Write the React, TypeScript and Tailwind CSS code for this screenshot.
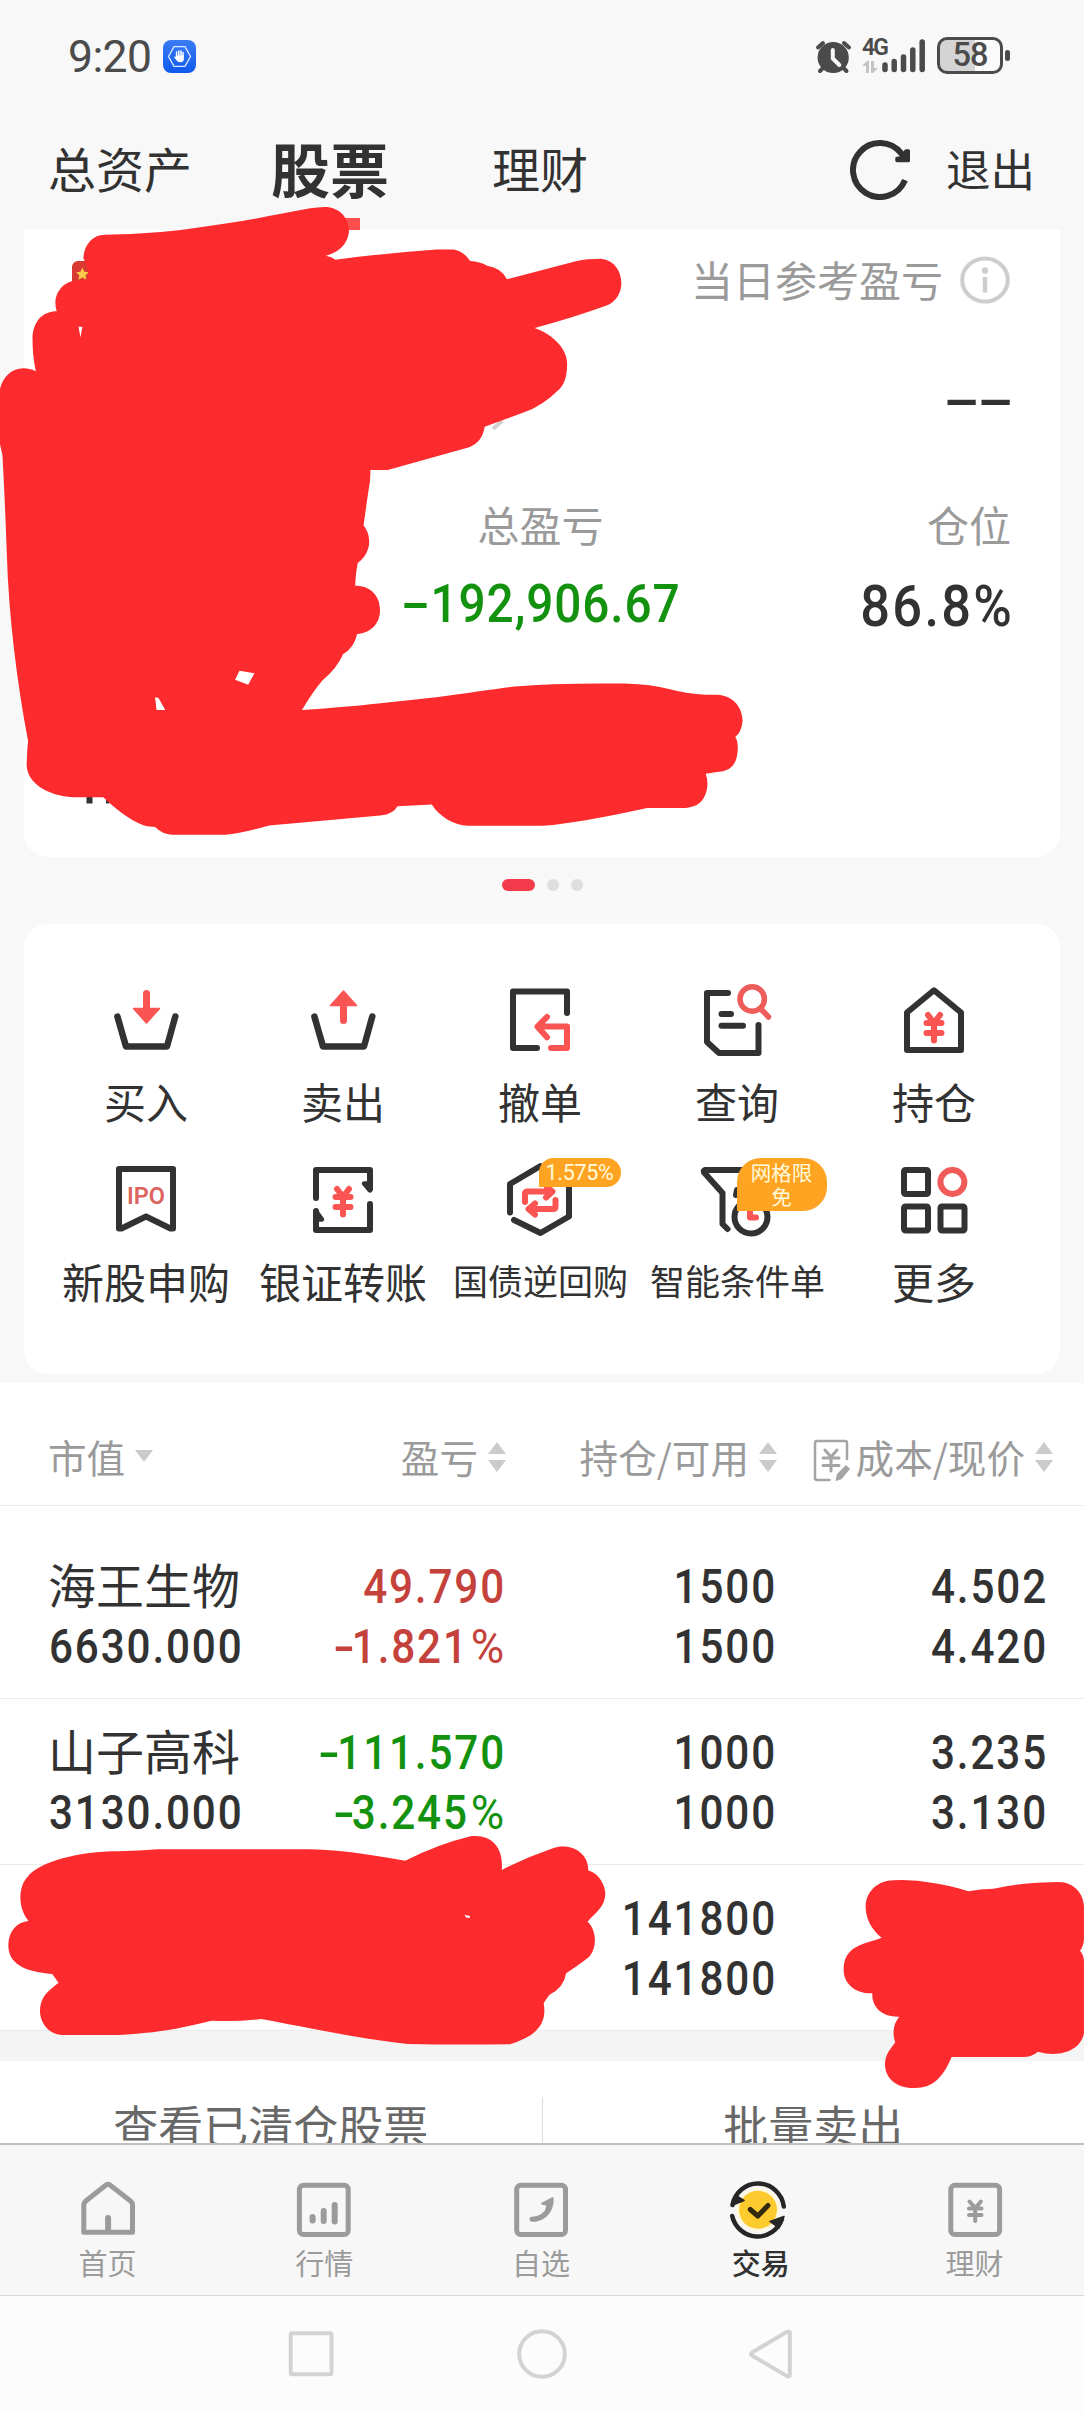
import React from "react";

const CJK = "font-['Noto_Sans_CJK_SC',sans-serif]";
const NUM = "font-[Roboto,'Noto_Sans_CJK_SC',sans-serif]";
const DARK = "#323232";
const RED = "#fa5553";

type IconProps = { box: string; size?: string; children: React.ReactNode };

function Icon({ box, size = "h-[80px] w-[80px]", children }: IconProps) {
  return (
    <svg
      viewBox={box}
      className={`block shrink-0 overflow-visible ${size}`}
      fill="none"
      stroke={DARK}
      strokeWidth={6}
      strokeLinecap="round"
      strokeLinejoin="round"
    >
      {children}
    </svg>
  );
}

function StatusBar() {
  return (
    <div className="flex h-[112px] shrink-0 items-start pr-[75px] pl-[68px] pt-[35px]">
      <span className={`${NUM} h-[44px] w-[95px] text-[44.5px] leading-[44px] tracking-[-0.6px] text-[#4b4b4b]`}>9:20</span>
      <svg viewBox="0 0 33 33" className="mt-[5px] h-[33px] w-[33px]" fill="none">
        <defs>
          <linearGradient id="blue" x1="0" y1="0" x2="0" y2="1">
            <stop offset="0" stopColor="#3b7cf5" />
            <stop offset="1" stopColor="#0f5aec" />
          </linearGradient>
        </defs>
        <rect width="33" height="33" rx="8" fill="url(#blue)" />
        <path d="M5.5 16.5 11 6.7h11l5.5 9.8L22 26.3H11z" stroke="#dbe9ff" strokeWidth="1.3" />
        <path d="M13.6 16.5v-4.4M15.8 16v-5M18 16v-5M20 16.5v-4" stroke="#fff" strokeWidth="1.5" strokeLinecap="round" />
        <path d="M12.8 15.5h8v3.4q0 3.3-3.5 3.3-2.6 0-4-2.2l-2.3-2.7q.5-1.5 1.8-.3z" fill="#fff" />
      </svg>
      <div className="ml-auto flex items-start">
        <svg viewBox="815 39 37 35" className="mt-[4px] h-[35px] w-[37px]" fill="none" stroke="#4b4b4b" strokeLinecap="round">
          <circle cx="833.2" cy="57.5" r="15.6" fill="#4b4b4b" stroke="none" />
          <path d="M818 47.5l5-4.5M849 47.5l-5-4.5M820 71l4-4M846.500 71l-4-4" strokeWidth="4" />
          <path d="M832.800 50v8.500l6.500 6.500" stroke="#f8f8f8" strokeWidth="4" strokeLinejoin="round" />
        </svg>
        <div className="ml-[10px] flex h-[38px] w-[26px] flex-col">
          <span className={`${NUM} mt-[1px] text-[23px] leading-[23px] font-semibold tracking-[-2px] text-[#4b4b4b]`}>4G</span>
          <svg viewBox="0 0 16 12" className="mt-[2px] h-[12px] w-[16px]" fill="#c4c4c4">
            <path d="M0 5 5 0h2v12H4V5zM9 0h3v7h4l-5 5H9z" />
          </svg>
        </div>
        <svg viewBox="880 38 47 36" className="-ml-[8px] mt-[3px] h-[36px] w-[47px]" stroke="#4b4b4b" strokeWidth="5.500" strokeLinecap="round">
          <path d="M885 65v4.500M894.200 61.500v8M903.500 57v12.500M912.800 50v19.500M922.200 42v27.500" />
        </svg>
        <div className="ml-[10px] mt-[2px] flex h-[37px] w-[66px] items-center justify-center rounded-[10px] border-[3px] border-[#4b4b4b] bg-[linear-gradient(to_right,#d4d4d4_58%,#fbfbfb_58%)]">
          <span className={`${NUM} text-[32.5px] leading-[31px] font-medium tracking-[-1px] text-[#4b4b4b]`}>58</span>
        </div>
        <div className="ml-[2px] mt-[15px] -mr-[1px] h-[11px] w-[5px] rounded-full bg-[#4b4b4b]" />
      </div>
    </div>
  );
}

function TopTabs() {
  return (
    <div className={`${CJK} flex h-[118px] shrink-0 items-start pl-[48px] text-[#323232]`}>
      <span className="mt-[30px] w-[222px] text-[48px] leading-[50px]">总资产</span>
      <div className="flex w-[120px] flex-col items-center">
        <span className="mt-[24px] text-[59px] leading-[64px] font-bold">股票</span>
        <span className="mt-[18px] h-[12px] w-[60px] bg-[#fd4f4f]" />
      </div>
      <span className="ml-[102px] mt-[30px] text-[48px] leading-[50px]">理财</span>
      <div className="ml-auto flex items-start pr-[49px]">
        <svg viewBox="850 140 60 60" className="mt-[28px] h-[60px] w-[60px]" fill="none" stroke={DARK} strokeWidth="6">
          <path d="M905 180.200A27 27 0 1 1 901.300 153.400l3.200 4.600" />
          <path d="M897 160.500v-2q4-.5 6.500-2.500.5-3 2.500-5h2.300v9.500z" fill={DARK} strokeWidth="3.500" strokeLinejoin="round" />
        </svg>
        <span className="ml-[36px] mt-[32px] text-[44.5px] leading-[48px]">退出</span>
      </div>
    </div>
  );
}

function AssetCard() {
  return (
    <section className="mx-[24px] flex h-[627px] shrink-0 flex-col rounded-b-[24px] bg-white px-[50px] pt-[26px]">
      <div className="flex h-[48px] items-center justify-end">
        <span className={`${CJK} -mt-[3px] text-[42px] leading-[48px] text-[#9a9a9a]`}>当日参考盈亏</span>
        <svg viewBox="0 0 50 48" className="ml-[17px] h-[48px] w-[50px]" fill="none" stroke="#cdcdcd">
          <ellipse cx="25" cy="24" rx="22.800" ry="21.500" strokeWidth="4" />
          <circle cx="25" cy="14.500" r="3.200" fill="#cdcdcd" stroke="none" />
          <path d="M25 21v15.500" strokeWidth="4.500" />
        </svg>
      </div>
      <div className={`${NUM} mt-[68px] flex h-[56px] origin-right scale-x-[1.95] justify-end text-[56px] leading-[56px] font-medium tracking-[-1.7px] text-[#323232]`}>
        <span className="-mr-[0.5px] whitespace-nowrap">--</span>
      </div>
      <div className={`${CJK} mt-[72px] grid h-[48px] grid-cols-3 text-[42px] leading-[48px] text-[#9a9a9a]`}>
        <span className="col-start-2 -ml-[3px] text-center">总盈亏</span>
        <span className="-mr-[1px] text-right">仓位</span>
      </div>
      <div className={`${NUM} mt-[24px] grid h-[64px] grid-cols-3 font-medium`}>
        <span className="col-start-2 scale-x-[0.9] pr-[1px] text-center text-[53px] leading-[64px] tracking-[1px] whitespace-nowrap text-[#13920f]">
          <span className="inline-block w-[31px] scale-x-[1.8]">-</span>192,906.67
        </span>
        <span className="-mr-[4px] origin-right scale-x-[0.92] pt-[3px] text-right text-[57px] leading-[64px] tracking-[2.4px] text-[#323232]">86.8%</span>
      </div>
    </section>
  );
}

const Yuan = ({ x, y, color = RED }: { x: number; y: number; color?: string }) => (
  <path
    transform={`translate(${x} ${y})`}
    d="M-6 -12.500 0 -4.500 6 -12.500M-7.500 -4.500h15M-7.500 5.500h15M0 -4v17"
    stroke={color}
    strokeWidth="6"
  />
);

const actions: { label: string; small?: boolean; icon: React.ReactNode; badge?: React.ReactNode }[] = [
  {
    label: "买入",
    icon: (
      <Icon box="106 980 80 80">
        <path d="M117.400 1016.500 126 1046.500h41l8.300-30" strokeWidth="6.500" />
        <path d="M146.500 993.500v16" stroke={RED} strokeWidth="7" />
        <path d="M133.500 1008.500h26l-13 14.500z" fill={RED} stroke={RED} strokeWidth="1.500" />
      </Icon>
    ),
  },
  {
    label: "卖出",
    icon: (
      <Icon box="303 980 80 80">
        <path d="M314.400 1016.500 323 1046.500h41l8.300-30" strokeWidth="6.500" />
        <path d="M343.500 1005v15.500" stroke={RED} strokeWidth="7" />
        <path d="M330.500 1005.500h26l-13-14.500z" fill={RED} stroke={RED} strokeWidth="1.500" />
      </Icon>
    ),
  },
  {
    label: "撤单",
    icon: (
      <Icon box="500 980 80 80">
        <path d="M537 1048H513V991.500h54V1013" />
        <path d="M551 1048h16V1026.500H538M547 1017 537.500 1026.700l9.500 10.500" stroke={RED} />
      </Icon>
    ),
  },
  {
    label: "查询",
    icon: (
      <Icon box="697 980 80 80">
        <path d="M728 993h-21v49l12 11h39.500v-28M721.500 1014h9.500M721.500 1025.700h21.500" />
        <circle cx="752.200" cy="999" r="12.200" stroke="#ee5d59" strokeWidth="5.500" />
        <path d="M761 1009l7.500 8" stroke="#ee5d59" strokeWidth="5.500" />
      </Icon>
    ),
  },
  {
    label: "持仓",
    icon: (
      <Icon box="894 980 80 80">
        <path d="M934 990.300 961 1012.500V1050H907v-37.500z" />
        <Yuan x={934} y={1027.500} />
      </Icon>
    ),
  },
  {
    label: "新股申购",
    icon: (
      <Icon box="106 1160 80 80">
        <path d="M119 1169h54v59.500h-2.500L146 1216.500l-24.500 12H119z" />
        <text
          x="146"
          y="1204"
          textAnchor="middle"
          stroke="none"
          fill="#dc6461"
          className="font-[Roboto,sans-serif] text-[23.500px] font-semibold"
        >
          IPO
        </text>
      </Icon>
    ),
  },
  {
    label: "银证转账",
    icon: (
      <Icon box="303 1160 80 80">
        <path d="M316 1198V1170h54v19M370 1204v26H316v-19" />
        <path d="M370 1190.500 364 1183.500h6zM316 1211l6 8.500h-6z" fill={DARK} strokeWidth="4.500" />
        <Yuan x={343} y={1201.500} />
      </Icon>
    ),
  },
  {
    label: "国债逆回购",
    small: true,
    icon: (
      <Icon box="500 1160 80 80">
        <path d="M510 1212.500V1184L540.500 1166l28.500 17v33.500L540.500 1233 514 1220" />
        <path d="M525 1202v-8q0-2.500 2.500-2.500H551M547 1187l5.500 4.500-6.500 6M555.500 1200v6.500q0 2.500-2.500 2.500H529M535 1203.500l-6.500 5.500 6.500 5.500" stroke={RED} />
      </Icon>
    ),
    badge: (
      <span className={`${NUM} absolute left-[39px] -top-[2px] flex h-[29px] w-[82px] items-center justify-center rounded-[15px] rounded-bl-none bg-[#ffa422] text-[21.5px] leading-[29px] tracking-[-0.3px] text-[#fffbdc]`}>
        1.575%
      </span>
    ),
  },
  {
    label: "智能条件单",
    small: true,
    icon: (
      <Icon box="697 1160 80 80">
        <path d="M746 1170H705q-2.500 1 0 3.500l17.500 19.500V1224l5 5" />
        <path d="M737 1190l-1 5" />
        <circle cx="751" cy="1217" r="16.500" />
        <path d="M750 1209v8.500h6" stroke={RED} />
      </Icon>
    ),
    badge: (
      <span className={`${CJK} absolute left-[40px] -top-[2px] flex h-[53px] w-[90px] flex-col items-center rounded-[24px] rounded-bl-none bg-[#ffa422] pt-[2px] text-[20.5px] leading-[24px] text-[#fffbdc]`}>
        <span>网格限</span>
        <span>免</span>
      </span>
    ),
  },
  {
    label: "更多",
    icon: (
      <Icon box="894 1160 80 80">
        <rect x="904" y="1170" width="24" height="24" rx="1.500" />
        <rect x="904" y="1206.500" width="24" height="24" rx="1.500" />
        <rect x="940.500" y="1206.500" width="24" height="24" rx="1.500" />
        <circle cx="952.400" cy="1182" r="12" stroke="#f15c5a" />
      </Icon>
    ),
  },
];

function QuickActions() {
  return (
    <section className="mx-[24px] h-[450px] shrink-0 rounded-[24px] bg-white pt-[56px] pl-[23px]">
      <div className="grid w-[985px] grid-cols-5">
        {actions.map((a) => (
          <div key={a.label} className="flex h-[180px] flex-col items-center">
            <div className="relative">
              {a.icon}
              {a.badge}
            </div>
            <span
              className={`${CJK} leading-[48px] whitespace-nowrap text-[#323232] ${a.small ? "mt-[16px] ml-[2px] text-[35px]" : "mt-[17px] ml-[1px] text-[42px]"}`}
            >
              {a.label}
            </span>
          </div>
        ))}
      </div>
    </section>
  );
}

function SortArrows({ down }: { down?: boolean }) {
  return down ? (
    <svg viewBox="0 0 18 12" className="ml-[10px] h-[12px] w-[18px]" fill="#cbcbcb">
      <path d="M0 0h18L9 12z" />
    </svg>
  ) : (
    <svg viewBox="0 0 18 30" className="mt-[2px] ml-[10px] h-[30px] w-[18px]" fill="#cbcbcb">
      <path d="M0 12h18L9 0zM0 18h18L9 30z" />
    </svg>
  );
}

const COLS = "grid grid-cols-[200px_257px_271px_277px] pl-[48px]";

const holdings = [
  { name: "海王生物", value: "6630.000", pnl: "49.790", pct: "-1.821%", tone: "text-[#c4423b]", qty: "1500", avail: "1500", cost: "4.502", price: "4.420" },
  { name: "山子高科", value: "3130.000", pnl: "-111.570", pct: "-3.245%", tone: "text-[#13920f]", qty: "1000", avail: "1000", cost: "3.235", price: "3.130" },
  { name: "", value: "", pnl: "", pct: "", tone: "", qty: "141800", avail: "141800", cost: "", price: "" },
];

function Figure({ text, left }: { text: string; left?: boolean }) {
  const negative = text.startsWith("-");
  const percent = text.endsWith("%");
  const body = text.slice(negative ? 1 : 0, percent ? -1 : undefined);
  return (
    <span className={`block h-[60px] scale-x-[0.88] whitespace-nowrap ${left ? "ml-[1px] origin-left" : "-mr-[1px] origin-right"}`}>
      {negative && <span className="inline-block w-[25px] scale-x-[1.5]">-</span>}
      {body}
      {percent && <span className="ml-[5px] inline-block origin-right scale-x-[1.08] font-normal">%</span>}
    </span>
  );
}

function Holdings() {
  return (
    <section className="shrink-0 bg-white">
      <div className={`${COLS} ${CJK} h-[123px] items-center border-b border-[#ebebeb] pt-[24px] text-[38.6px] leading-[44px] whitespace-nowrap text-[#9a9a9a]`}>
        <span className="flex items-center">市值<SortArrows down /></span>
        <span className="flex translate-x-[1px] items-center justify-end">盈亏<SortArrows /></span>
        <span className="flex translate-x-[1px] items-center justify-end">持仓/可用<SortArrows /></span>
        <span className="flex items-center justify-end">
          <svg viewBox="812 1439 38 43" className="mt-[8px] mr-[5px] h-[43px] w-[38px]" fill="none" stroke="#a5a5a5" strokeWidth="2.500" strokeLinecap="round">
            <path d="M846 1459v-16q0-2-2-2h-28q-2 0-2 2v35q0 2 2 2h12.500" />
            <path d="M824 1450l6 7 6-7M822 1458h16M822 1465.500h16M830 1458v13" strokeWidth="3" />
            <path d="M835.500 1480l1-5.500 8.500-8.500 3 3-8 9.500z" fill="#a5a5a5" strokeWidth="1.500" />
          </svg>
          成本/现价<SortArrows />
        </span>
      </div>
      {holdings.map((h, i) => (
        <div
          key={i}
          className={`${COLS} ${NUM} border-b border-[#ebebeb] text-[48px] leading-[60px] font-medium tracking-[2.1px] text-[#323232] ${i === 0 ? "h-[193px] pt-[51px]" : "h-[166px] pt-[24px]"}`}
        >
          <div>
            <span className={`${CJK} block h-[60px] -translate-y-[4px] font-normal tracking-normal whitespace-nowrap`}>{h.name}</span>
            <Figure text={h.value} left />
          </div>
          <div className={`text-right ${h.tone}`}>
            <Figure text={h.pnl} />
            <Figure text={h.pct} />
          </div>
          <div className="text-right">
            <Figure text={h.qty} />
            <Figure text={h.avail} />
          </div>
          <div className="pr-[6px] text-right">
            <Figure text={h.cost} />
            <Figure text={h.price} />
          </div>
        </div>
      ))}
      <div className="h-[30px] bg-[#f4f4f4]" />
      <div className={`${CJK} flex h-[82px] overflow-hidden text-center text-[45px] leading-[60px] text-[#686868]`}>
        <span className="flex-1 pt-[34px]">查看已清仓股票</span>
        <span className="mt-[36px] w-px bg-[#dcdcdc]" />
        <span className="flex-1 pt-[34px]">批量卖出</span>
      </div>
    </section>
  );
}

const G = "#9b9b9b";
const NAV_SIZE = "h-[60px] w-[60px]";

const navItems = [
  {
    label: "首页",
    icon: (
      <Icon box="78.500 2180 60 60" size={NAV_SIZE}>
        <g stroke={G} strokeWidth="5">
          <path d="M106.500 2185q2-1.500 4 0l20.500 16q2 1.500 2 4v27.300H84.300V2205q0-2.500 2-4z" />
          <path d="M108.600 2218v13" strokeWidth="6" />
        </g>
      </Icon>
    ),
  },
  {
    label: "行情",
    icon: (
      <Icon box="295.300 2180 60 60" size={NAV_SIZE}>
        <g stroke={G}>
          <rect x="299.700" y="2185.300" width="48.800" height="49.200" rx="4" strokeWidth="5" />
          <path d="M312.900 2217v3.500M324 2211v10M335 2205v16.500" />
        </g>
      </Icon>
    ),
  },
  {
    label: "自选",
    icon: (
      <Icon box="512 2180 60 60" size={NAV_SIZE}>
        <g stroke={G} strokeWidth="5">
          <rect x="516.700" y="2185.300" width="48.800" height="49.200" rx="4" />
          <path d="M532 2219.300Q545 2219 549.500 2207" />
          <path d="M542.500 2203.500 552.500 2198.500Q553 2208 546 2215.500L547.500 2204.500z" fill={G} strokeWidth="2.500" />
        </g>
      </Icon>
    ),
  },
  {
    label: "交易",
    active: true,
    icon: (
      <Icon box="729 2180 60 60" size={NAV_SIZE}>
        <circle cx="758" cy="2209.800" r="22" fill="#fff8e0" stroke="none" />
        <circle cx="758" cy="2209.800" r="19" fill="#fecb2f" stroke="none" />
        <g stroke="#262626" strokeWidth="4.500">
          <path d="M732.500 2205A26 26.500 0 0 1 783.800 2206.500" />
          <path d="M732.200 2216A26 26.500 0 0 0 782 2219" />
          <path d="M731.500 2205.500 736 2195.500 744 2200.500zM784 2216.500 770 2221.500 779 2228z" fill="#262626" strokeWidth="1.500" />
          <path d="M750.300 2209.500 757.800 2216 768 2205.500" strokeWidth="5" stroke="#33290d" />
        </g>
      </Icon>
    ),
  },
  {
    label: "理财",
    icon: (
      <Icon box="946 2180 60 60" size={NAV_SIZE}>
        <rect x="950.800" y="2185.300" width="48.800" height="49.200" rx="4" stroke={G} strokeWidth="5" />
        <path d="M969.500 2201.500 975.200 2208l5.700-6.500M969 2208.500h12.500M969 2215h12.500M975.200 2208.500v12.500" stroke={G} strokeWidth="4" />
      </Icon>
    ),
  },
];

function BottomNav() {
  return (
    <nav className="grid h-[153px] shrink-0 grid-cols-5 border-t-2 border-b border-t-[#c0c0c0] border-b-[#d9d9d9] bg-[#f7f7f7]">
      {navItems.map((n) => (
        <div key={n.label} className="flex flex-col items-center pt-[35px]">
          {n.icon}
          <span
            className={`${CJK} mt-[4px] text-[29px] leading-[36px] ${n.active ? "translate-x-[2px] font-medium text-[#303030]" : "-translate-x-[1px] text-[#9b9b9b]"}`}
          >
            {n.label}
          </span>
        </div>
      ))}
    </nav>
  );
}

function SystemNav() {
  return (
    <div className="flex h-[116px] shrink-0 items-start justify-center gap-[180px] bg-[#fcfcfc] pt-[32px]">
      <Icon box="287 2328 50 52" size="h-[52px] w-[50px]">
        <rect x="290.700" y="2333.300" width="40.800" height="41" rx="1.500" stroke="#d3d3d3" strokeWidth="4" />
      </Icon>
      <Icon box="517 2328 50 52" size="h-[52px] w-[50px]">
        <circle cx="542" cy="2354" r="22.800" stroke="#d3d3d3" strokeWidth="4" />
      </Icon>
      <Icon box="747 2328 50 52" size="h-[52px] w-[50px]">
        <path d="M752 2352.500 787 2331.800q2.800-1.300 2.800 1.500v41.500q0 2.500-2.800 1.300L752 2355.500q-2-1.500 0-3z" stroke="#d3d3d3" strokeWidth="4" />
      </Icon>
    </div>
  );
}

/* Freehand marker strokes that lie over the account details. */
function MarkerOverlay() {
  return (
    <svg viewBox="0 0 1084 2412" className="pointer-events-none absolute inset-0 h-[2412px] w-[1084px]" fill="#fd2b2d">
      <rect x="72" y="261" width="30" height="30" rx="6" fill="#d83a33" />
      <path d="M82.400 267.500l1.900 4.200 4.500.5-3.300 3.100.9 4.500-4-2.200-4 2.200.9-4.500-3.300-3.100 4.500-.5z" fill="#fcc94a" />
      <path d="M493 429l9-8" stroke="#d5cfcf" strokeWidth="4" />
      <path d="M86.500 790h6v13.500h-6zM106 790h3v13.500h-3z" fill="#323232" />
      <g transform="translate(0 190) scale(0.4847 0.4273)">
        <path
          fillRule="evenodd"
          d="M215 105Q330 103 420 86C500 74 560 60 640 43Q655 41 670 40C700 40 720 65 720 98Q715 140 672 154Q685 157 692 163Q800 147 900 139H935Q955 141 970 166Q990 167 1005 177Q1035 182 1046 209L1190 166Q1210 161 1240 161C1268 165 1282 190 1282 220Q1280 255 1253 270Q1180 300 1103 323C1145 340 1170 375 1170 405C1170 430 1167 450 1155 465Q1120 505 1080 521L1000 554Q995 590 968 602L800 655H764Q765 680 760 705L750 785C765 805 770 845 738 873Q733 905 733 926C765 926 784 950 784 983C784 1015 765 1037 737 1039Q730 1072 708 1086Q695 1120 665 1148Q645 1175 623 1217Q720 1210 780 1202L900 1187Q1000 1172 1060 1162Q1150 1153 1290 1155Q1345 1157 1380 1168Q1420 1180 1455 1181H1480C1515 1184 1532 1212 1532 1243Q1530 1268 1517 1280Q1523 1290 1522 1310Q1520 1362 1480 1362L1456 1366Q1462 1385 1458 1405Q1450 1444 1415 1446H1335Q1200 1480 1120 1488H965C935 1486 905 1465 891 1438L820 1442Q812 1460 785 1464L555 1487Q500 1505 465 1509H355Q335 1508 320 1491L303 1489Q265 1477 213 1421H150C100 1418 55 1388 55 1345Q56 1305 58 1290C35 1150 18 1000 14 850Q10 720 5 620L0 595V465C8 428 38 405 74 424Q67 390 67 345C69 305 90 284 117 284C106 245 130 212 160 211L182 208Q184 188 172 160C173 130 190 106 215 105ZM494 1125L525 1131 512 1158 485 1146ZM320 1187L327 1189 341 1217 323 1217ZM162 320H170L166 345Z"
        />
      </g>
      <g transform="translate(0 1820) scale(0.3954 0.3333)">
        <path
          fillRule="evenodd"
          d="M300 94Q350 93 400 88H780C880 90 960 110 1025 122Q1110 72 1190 49C1245 42 1274 85 1269 150Q1330 112 1395 86C1445 65 1489 100 1488 152C1510 156 1530 190 1531 220C1531 260 1505 280 1486 305C1510 330 1510 385 1490 410Q1475 425 1432 460Q1425 505 1390 524Q1380 538 1375 550C1383 605 1365 645 1290 673Q1150 675 1030 672C900 655 760 618 660 597Q600 606 535 602Q430 633 370 638Q320 645 280 645H155C120 641 101 605 101 572C102 530 120 515 148 488L132 462C60 455 21 430 21 375C22 330 45 306 72 303C45 265 45 200 70 170C100 125 200 94 300 94ZM1174 284L1188 288 1189 293 1180 293Z"
        />
      </g>
      <g transform="translate(600 1820) scale(0.3333)">
        <path d="M880 181Q940 178 1000 189 1050 196 1105 214 1140 206 1180 206 1260 190 1310 188L1375 186C1425 186 1452 225 1452 260V360Q1450 380 1440 392 1452 405 1452 425V640C1445 680 1405 702 1360 702Q1335 702 1314 695 1295 711 1270 711H1055C1030 770 1000 804 945 804 890 806 855 775 855 732 856 702 872 687 886 667 876 640 880 610 898 590 850 592 815 565 817 520 765 522 731 490 731 450 731 375 795 372 845 353 810 325 797 290 797 260 797 215 835 181 880 181Z" />
      </g>
    </svg>
  );
}

export default function App() {
  return (
    <main className="relative flex h-[2412px] w-[1084px] flex-col overflow-hidden bg-[#f8f8f8]">
      <StatusBar />
      <TopTabs />
      <AssetCard />
      <div className="flex h-[67px] shrink-0 items-start justify-center gap-[12px] pt-[22px]">
        <span className="h-[12px] w-[33px] rounded-full bg-[#f43b4b]" />
        <span className="h-[12px] w-[12px] rounded-full bg-[#dedede]" />
        <span className="h-[12px] w-[12px] rounded-full bg-[#dedede]" />
      </div>
      <QuickActions />
      <div className="h-[9px] shrink-0" />
      <Holdings />
      <BottomNav />
      <SystemNav />
      <MarkerOverlay />
    </main>
  );
}
